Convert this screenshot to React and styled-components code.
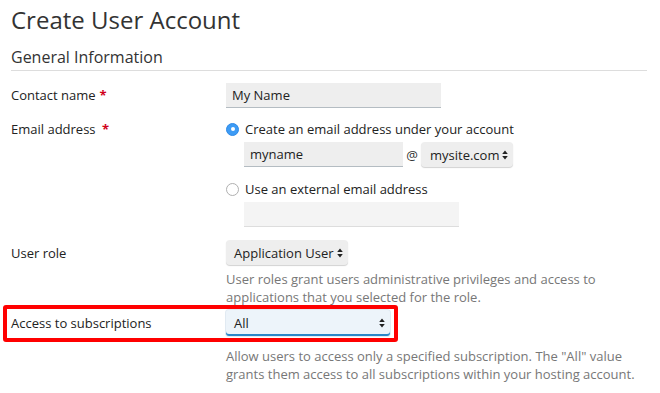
import React from "react";
import styled, { createGlobalStyle } from "styled-components";

const Global = createGlobalStyle`
  html, body { margin: 0; padding: 0; background: #fff; }
  body { font-family: "Open Sans", "Noto Sans", sans-serif; color: #333; font-size: 13px; }
  * { box-sizing: border-box; }
`;

const Page = styled.div`
  width: 660px;
  height: 393px;
  padding: 0 13px 0 11px;
  overflow: hidden;
`;

const Title = styled.h1`
  margin: 0;
  padding-top: 3px;
  font-size: 24px;
  line-height: 33px;
  font-weight: 400;
  color: #333;
`;

const SectionTitle = styled.h2`
  margin: 10px 0 0;
  font-size: 16px;
  line-height: 22px;
  font-weight: 400;
  color: #333;
  padding-bottom: 2px;
  border-bottom: 1px solid #ddd;
`;

const Form = styled.div`
  display: flex;
  flex-direction: column;
  padding-top: 12px;
`;

const Row = styled.div`
  display: grid;
  grid-template-columns: 215px 1fr;
  align-items: start;
  margin-top: ${(p) => p.$gap || 0}px;
`;

const HighlightRow = styled.div`
  display: grid;
  grid-template-columns: 215px 164px;
  align-items: center;
  width: fit-content;
  margin-left: -8px;
  border: 4px solid #f00;
  border-radius: 3px;
  padding: 1px 4px 2px 4px;
`;

const Label = styled.div`
  font-size: 13px;
  line-height: 18px;
  color: #222;
  padding-top: ${(p) => p.$pt || 0}px;
`;

const Required = styled.span`
  color: #d0021b;
  font-weight: 700;
  margin-left: ${(p) => p.$ml || 4}px;
`;

const Field = styled.div`
  display: flex;
  flex-direction: column;
`;

const TextInput = styled.div`
  width: ${(p) => p.$w}px;
  height: 25px;
  padding: 0 6px;
  display: flex;
  align-items: center;
  background: ${(p) => (p.$empty ? "#f4f4f4" : "#eeeeee")};
  border-bottom: 1px solid ${(p) => (p.$empty ? "#dddddd" : "#b4bcc2")};
  font-size: 13px;
  color: #222;
  margin-left: ${(p) => p.$ml || 0}px;
  margin-top: ${(p) => p.$mt || 0}px;
`;

const RadioLine = styled.label`
  display: flex;
  align-items: center;
  gap: 6px;
  height: 18px;
  font-size: 13px;
  color: #222;
  margin-top: ${(p) => p.$mt || 0}px;
`;

const RadioDot = styled.span`
  width: 13px;
  height: 13px;
  border-radius: 50%;
  flex: none;
  background: ${(p) => (p.$on ? "#3d9bf5" : "#fff")};
  border: 1px solid ${(p) => (p.$on ? "#2f8ae6" : "#b0b0b0")};
  display: flex;
  align-items: center;
  justify-content: center;
  &::after {
    content: "";
    width: 4px;
    height: 4px;
    border-radius: 50%;
    background: #fff;
    display: ${(p) => (p.$on ? "block" : "none")};
  }
`;

const EmailLine = styled.div`
  display: flex;
  align-items: center;
  margin-top: 4px;
  padding-left: 18px;
`;

const At = styled.span`
  width: 18px;
  text-align: center;
  font-size: 13px;
  color: #333;
`;

const Select = styled.div`
  width: ${(p) => p.$w}px;
  height: ${(p) => p.$h || 25}px;
  display: flex;
  align-items: center;
  justify-content: space-between;
  padding: 0 5px 0 ${(p) => p.$pl || 8}px;
  border-radius: ${(p) => (p.$active ? 3 : 4)}px;
  background: ${(p) => (p.$active ? "#edf4fa" : "#eeeeee")};
  box-shadow: ${(p) =>
    p.$active
      ? "inset 0 -2px 0 #2b87c8, 0 0 0 1px #e1eaf2"
      : "0 1px 1px rgba(0,0,0,0.18)"};
  font-size: 13px;
  color: #222;
  margin-top: ${(p) => p.$mt || 0}px;
`;

const Help = styled.p`
  margin: ${(p) => p.$mt || 0}px 0 ${(p) => p.$mb || 0}px 215px;
  width: 425px;
  font-size: 13px;
  line-height: 18px;
  color: #777;
`;

const Arrows = () => (
  <svg width="6" height="10" viewBox="0 0 6 10" aria-hidden="true">
    <path d="M3 0.5 L5.8 4 L0.2 4 Z M3 9.5 L5.8 6 L0.2 6 Z" fill="#222" />
  </svg>
);

export default function App() {
  return (
    <>
      <Global />
      <Page>
        <Title>Create User Account</Title>
        <SectionTitle>General Information</SectionTitle>
        <Form>
          <Row>
            <Label $pt={3}>
              Contact name<Required>*</Required>
            </Label>
            <TextInput $w={215}>My Name</TextInput>
          </Row>
          <Row $gap={12}>
            <Label>
              Email address <Required $ml={3}>*</Required>
            </Label>
            <Field>
              <RadioLine>
                <RadioDot $on />
                Create an email address under your account
              </RadioLine>
              <EmailLine>
                <TextInput $w={159}>myname</TextInput>
                <At>@</At>
                <Select $w={92} $pl={9}>
                  mysite.com
                  <Arrows />
                </Select>
              </EmailLine>
              <RadioLine $mt={13}>
                <RadioDot />
                Use an external email address
              </RadioLine>
              <TextInput $w={215} $ml={18} $mt={4} $empty />
            </Field>
          </Row>
          <Row $gap={13}>
            <Label $pt={4}>User role</Label>
            <Field>
              <Select $w={122}>
                Application User
                <Arrows />
              </Select>
            </Field>
          </Row>
          <Help $mt={5} $mb={-1}>
            User roles grant users administrative privileges and access to
            applications that you selected for the role.
          </Help>
          <HighlightRow>
            <Label>Access to subscriptions</Label>
            <Select $w={164} $h={26} $active>
              All
              <Arrows />
            </Select>
          </HighlightRow>
          <Help $mt={5}>
            Allow users to access only a specified subscription. The "All"
            value grants them access to all subscriptions within your hosting
            account.
          </Help>
        </Form>
      </Page>
    </>
  );
}
